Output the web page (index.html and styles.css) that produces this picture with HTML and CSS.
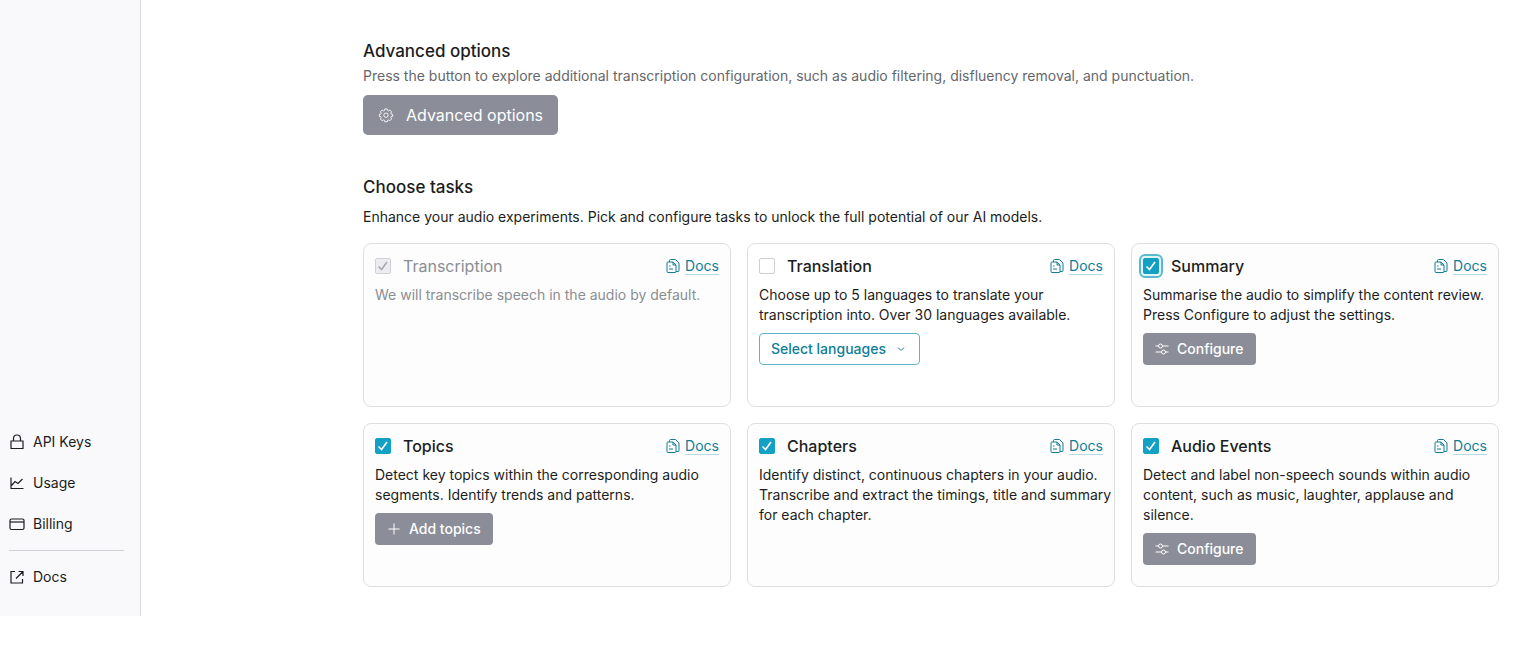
FILE: index.html
```html
<!DOCTYPE html>
<html lang="en">
  <head>
    <meta charset="UTF-8" />
    <meta name="viewport" content="width=device-width, initial-scale=1.0" />
    <title>Transcription tasks</title>
    <link rel="stylesheet" href="styles.css">
  </head>
  <body>
    <!-- shared icons -->
    <svg class="sprite" aria-hidden="true">
      <symbol id="icon-docs" viewBox="0 0 14 16">
        <path d="M2 4h5l3 3v6.500a1 1 0 0 1-1 1H2a1 1 0 0 1-1-1V5a1 1 0 0 1 1-1zM3 8h1.500M3 11h4M3.500 4V2.500a1 1 0 0 1 1-1H9.500l3.500 3.500v7.500a1 1 0 0 1-1 1h-2M7 4v3h3" />
      </symbol>
      <symbol id="icon-sliders" viewBox="0 0 14 12">
        <path d="M.5 3h3M7.500 3h6M.5 9h6M10.500 9h3" />
        <circle cx="5.500" cy="3" r="2" />
        <circle cx="8.500" cy="9" r="2" />
      </symbol>
    </svg>

    <div class="app">
      <aside class="sidebar">
        <nav>
          <a class="nav-item" href="#keys">
            <svg class="icon" viewBox="0 0 16 16"><path d="M2 7h12v7.500H2zM4.500 7V4.500a3.500 3.500 0 0 1 7 0V7" /></svg>
            API Keys
          </a>
          <a class="nav-item" href="#usage">
            <svg class="icon" viewBox="0 0 16 16"><path d="M2 2.500V13.500H14.500M2.500 10.500L6 6.500l3 2L13.500 4" /></svg>
            Usage
          </a>
          <a class="nav-item" href="#billing">
            <svg class="icon" viewBox="0 0 16 16"><rect x="1" y="3" width="14" height="10.500" rx="1.500" /><path d="M1 6h14" /></svg>
            Billing
          </a>
          <hr />
          <a class="nav-item" href="#docs">
            <svg class="icon" viewBox="0 0 16 16"><path d="M6 2.500H2v11.500h11.500V10M9.500 2.500H14V7M14 2.500L7 9.500" /></svg>
            Docs
          </a>
        </nav>
      </aside>

      <main class="main">
        <section class="advanced">
          <h2>Advanced options</h2>
          <p class="muted">Press the button to explore additional transcription configuration, such as audio filtering, disfluency removal, and punctuation.</p>
          <button class="btn btn-large" type="button">
            <svg class="icon" viewBox="-1 -1 18 18">
              <path d="M6.600 1.200h2.800l.4 1.700 1.100.5 1.500-1 1.900 1.900-.9 1.500.4 1.100 1.700.4v2.200l-1.700.4-.4 1.100.9 1.500-1.900 1.900-1.500-.9-1.100.4-.4 1.700H6.600l-.4-1.700-1.100-.4-1.500.9-1.900-1.900.9-1.500-.4-1.100-1.700-.4V7.300l1.700-.4.4-1.100-.9-1.500 1.900-1.900 1.500 1 1.100-.5z" />
              <circle cx="8" cy="8.200" r="2.500" />
            </svg>
            Advanced options
          </button>
        </section>

        <section class="tasks">
          <h2>Choose tasks</h2>
          <p>Enhance your audio experiments. Pick and configure tasks to unlock the full potential of our AI models.</p>

          <div class="cards">
            <div class="card disabled">
              <div class="card-head">
                <input type="checkbox" id="transcription" checked disabled />
                <label for="transcription">Transcription</label>
                <a class="docs" href="#docs"><svg class="docs-icon"><use href="#icon-docs" /></svg><span>Docs</span></a>
              </div>
              <p>We will transcribe speech in the audio by default.</p>
            </div>

            <div class="card plain">
              <div class="card-head">
                <input type="checkbox" id="translation" />
                <label for="translation">Translation</label>
                <a class="docs" href="#docs"><svg class="docs-icon"><use href="#icon-docs" /></svg><span>Docs</span></a>
              </div>
              <p>Choose up to 5 languages to translate your transcription into. Over 30 languages available.</p>
              <select class="select" aria-label="Languages">
                <option>Select languages</option>
              </select>
            </div>

            <div class="card">
              <div class="card-head">
                <input class="focused" type="checkbox" id="summary" checked />
                <label for="summary">Summary</label>
                <a class="docs" href="#docs"><svg class="docs-icon"><use href="#icon-docs" /></svg><span>Docs</span></a>
              </div>
              <p>Summarise the audio to simplify the content review. Press Configure to adjust the settings.</p>
              <button class="btn" type="button"><svg class="btn-icon"><use href="#icon-sliders" /></svg>Configure</button>
            </div>

            <div class="card">
              <div class="card-head">
                <input type="checkbox" id="topics" checked />
                <label for="topics">Topics</label>
                <a class="docs" href="#docs"><svg class="docs-icon"><use href="#icon-docs" /></svg><span>Docs</span></a>
              </div>
              <p>Detect key topics within the corresponding audio segments. Identify trends and patterns.</p>
              <button class="btn" type="button"><svg class="btn-icon" viewBox="0 0 14 12"><path d="M7 .5v11M1.500 6h11" /></svg>Add topics</button>
            </div>

            <div class="card">
              <div class="card-head">
                <input type="checkbox" id="chapters" checked />
                <label for="chapters">Chapters</label>
                <a class="docs" href="#docs"><svg class="docs-icon"><use href="#icon-docs" /></svg><span>Docs</span></a>
              </div>
              <p>Identify distinct, continuous chapters in your audio.<br />Transcribe and extract the timings, title and summary for each chapter.</p>
            </div>

            <div class="card">
              <div class="card-head">
                <input type="checkbox" id="events" checked />
                <label for="events">Audio Events</label>
                <a class="docs" href="#docs"><svg class="docs-icon"><use href="#icon-docs" /></svg><span>Docs</span></a>
              </div>
              <p>Detect and label non-speech sounds within audio content, such as music, laughter, applause and silence.</p>
              <button class="btn" type="button"><svg class="btn-icon"><use href="#icon-sliders" /></svg>Configure</button>
            </div>
          </div>
        </section>
      </main>
    </div>
  </body>
</html>
```
FILE: styles.css
```css
* {
  box-sizing: border-box;
}
body {
  margin: 0;
  font-family: Inter, "Liberation Sans", sans-serif;
  font-size: 14px;
  line-height: 20px;
  color: #1c1d21;
  background: #fff;
}
h2,
p {
  margin: 0;
}
svg {
  fill: none;
  stroke: currentColor;
}
.sprite {
  display: none;
}
.app {
  display: flex;
}

/* sidebar */
.sidebar {
  flex: none;
  width: 141px;
  display: flex;
  flex-direction: column;
  justify-content: flex-end;
  padding: 0 16px 19px 9px;
  background: #f9f9fc;
  border-right: 1px solid #d9d9de;
}
.nav-item {
  display: flex;
  align-items: center;
  gap: 8px;
  padding: 10px 0;
  margin-bottom: 1px;
  color: inherit;
  text-decoration: none;
}
.nav-item:last-child {
  margin-bottom: 0;
}
.icon {
  flex: none;
  width: 16px;
  height: 16px;
}
.nav-item .icon {
  stroke-width: 1.2;
}
.sidebar hr {
  margin: 6px 0;
  border: 0;
  border-top: 1px solid #cfcfd4;
}

/* main */
.main {
  flex: 1;
  min-width: 0;
  padding: 39px 40px 29px 222px;
}
h2 {
  font-size: 17px;
  line-height: 24px;
  font-weight: 500;
}
.advanced {
  margin-bottom: 40px;
}
.muted {
  margin: 3px 0 9px;
  color: #66676b;
}
.tasks h2 {
  margin-bottom: 8px;
}
.btn {
  display: flex;
  align-items: center;
  gap: 8px;
  height: 32px;
  padding: 0 12px;
  border: 0;
  border-radius: 4px;
  background: #8b8d98;
  color: #fff;
  font: inherit;
  font-weight: 500;
  cursor: pointer;
}
.btn-icon {
  width: 14px;
  height: 12px;
}
.btn-large {
  height: 40px;
  gap: 12px;
  padding: 0 15px;
  font-size: 16px;
  font-weight: 400;
  border-radius: 5px;
}

/* cards */
.cards {
  display: grid;
  grid-template-columns: repeat(3, 1fr);
  gap: 16px;
  margin-top: 16px;
}
.card {
  min-height: 164px;
  padding: 10px 11px;
  border: 1px solid #dfdfe3;
  border-radius: 8px;
  background: #fdfdfe;
}
.card.plain {
  background: #fff;
}
.card-head {
  display: flex;
  align-items: center;
  margin-bottom: 7px;
  line-height: 24px;
}
.card-head label {
  margin-left: 12px;
  font-size: 16px;
  font-weight: 500;
}
.card p {
  margin: 0 -10px 8px 0;
}
.disabled p,
.disabled label {
  color: #8b8d92;
}
.disabled label {
  font-weight: 400;
}
.docs {
  display: flex;
  align-items: center;
  gap: 5px;
  margin-left: auto;
  color: #107d98;
  text-decoration: none;
}
.docs span {
  line-height: 16px;
  border-bottom: 1px solid #b5dbe4;
}
.docs-icon {
  width: 14px;
  height: 16px;
}
input[type="checkbox"] {
  appearance: none;
  flex: none;
  width: 16px;
  height: 16px;
  margin: 0;
  border: 1px solid #cdced6;
  border-radius: 2px;
  background: #fff;
}
input[type="checkbox"]:checked {
  border-color: #12a0c3;
  background: #12a0c3 url("data:image/svg+xml,%3Csvg xmlns='http://www.w3.org/2000/svg' viewBox='0 0 14 14' fill='none' stroke='white' stroke-width='1.6'%3E%3Cpath d='M2.500 7.500l3 3L11 3'/%3E%3C/svg%3E") center / 14px no-repeat;
}
input[type="checkbox"]:disabled {
  border-color: #d0d0d8;
  background: #ececf1 url("data:image/svg+xml,%3Csvg xmlns='http://www.w3.org/2000/svg' viewBox='0 0 14 14' fill='none' stroke='%23a5a6b0' stroke-width='1.5'%3E%3Cpath d='M2.500 7.500l3 3L11 3'/%3E%3C/svg%3E") center / 14px no-repeat;
}
input.focused {
  outline: 2px solid #5bb9cf;
  outline-offset: 2px;
  box-shadow: 0 0 0 2px #dff3f8;
}
.select {
  appearance: none;
  display: block;
  height: 32px;
  padding: 0 33px 0 11px;
  border: 1px solid #5fb3c7;
  border-radius: 4px;
  background: #fff url("data:image/svg+xml,%3Csvg xmlns='http://www.w3.org/2000/svg' viewBox='0 0 8 8' fill='none' stroke='%23107d98'%3E%3Cpath d='M1 2.500l3 3 3-3'/%3E%3C/svg%3E") right 14px center / 8px no-repeat;
  color: #107d98;
  font: inherit;
  font-weight: 500;
}
```
